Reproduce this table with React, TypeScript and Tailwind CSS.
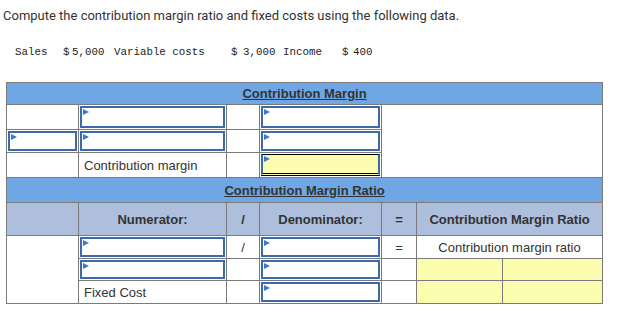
import React from "react";

const Flag = () => (
  <span className="absolute left-[1px] top-[1px] h-0 w-0 border-y-[3px] border-l-[6px] border-y-transparent border-l-[#3b78d0]" />
);

const InputBox = ({ h, yellow = false }: { h: string; yellow?: boolean }) => (
  <div
    className={
      yellow
        ? `relative ${h} w-full border-x-2 border-t border-b-[3px] border-double border-x-[#3d6aa8] border-t-black border-b-black bg-[#fbfcad]`
        : `relative ${h} w-full border-2 border-[#3d6aa8] bg-white`
    }
  >
    <Flag />
  </div>
);

const td = "border border-[#7b7b7b] p-0 align-middle";
const inputTd = "border border-[#7b7b7b] p-[1px] align-middle";

export default function App() {
  return (
    <div className="h-[329px] w-[634px] bg-white text-[#333]" style={{ fontFamily: "'Liberation Sans', Arial, sans-serif" }}>
      <p className="pl-[3px] pt-[7px] text-[13px] leading-[18px] text-[#333]" style={{ fontFamily: "Roboto, sans-serif" }}>
        Compute the contribution margin ratio and fixed costs using the following data.
      </p>

      <div className="mt-[20px] flex text-[10.8px] leading-[14px] text-[#222]" style={{ fontFamily: "'Liberation Mono', 'Courier New', monospace" }}>
        <span className="ml-[15px] w-[48px]">Sales</span>
        <span className="w-[9px]">$</span>
        <span className="w-[42px]">5,000</span>
        <span className="w-[117px]">Variable costs</span>
        <span className="w-[12px]">$</span>
        <span className="w-[40px]">3,000</span>
        <span className="w-[59px]">Income</span>
        <span className="w-[11px]">$</span>
        <span>400</span>
      </div>

      <table className="ml-[6px] mt-[23px] w-[596px] table-fixed border-collapse text-[13px] leading-[15px]">
        <colgroup>
          <col className="w-[72px]" />
          <col className="w-[148px]" />
          <col className="w-[33px]" />
          <col className="w-[122px]" />
          <col className="w-[35px]" />
          <col className="w-[86px]" />
          <col className="w-[100px]" />
        </colgroup>
        <tbody>
          <tr className="h-[22px] bg-[#6ea7e4]">
            <td colSpan={7} className={`${td} text-center font-bold underline`}>
              Contribution Margin
            </td>
          </tr>
          <tr className="h-[25px]">
            <td className={td}></td>
            <td className={inputTd}><InputBox h="h-[22px]" /></td>
            <td className={td}></td>
            <td className={inputTd}><InputBox h="h-[22px]" /></td>
            <td colSpan={3} rowSpan={3} className={td}></td>
          </tr>
          <tr className="h-[23px]">
            <td className={inputTd}><InputBox h="h-[20px]" /></td>
            <td className={inputTd}><InputBox h="h-[20px]" /></td>
            <td className={td}></td>
            <td className={inputTd}><InputBox h="h-[20px]" /></td>
          </tr>
          <tr className="h-[25px]">
            <td className={td}></td>
            <td className={`${td} pl-[5px]`}>Contribution margin</td>
            <td className={td}></td>
            <td className={inputTd}><InputBox h="h-[22px]" yellow /></td>
          </tr>
          <tr className="h-[25px] bg-[#6ea7e4]">
            <td colSpan={7} className={`${td} text-center font-bold underline`}>
              Contribution Margin Ratio
            </td>
          </tr>
          <tr className="h-[33px] bg-[#adbfdc] font-bold">
            <td className={td}></td>
            <td className={`${td} text-center`}>Numerator:</td>
            <td className={`${td} text-center`}>/</td>
            <td className={`${td} text-center`}>Denominator:</td>
            <td className={`${td} text-center`}>=</td>
            <td colSpan={2} className={`${td} text-center`}>Contribution Margin Ratio</td>
          </tr>
          <tr className="h-[23px]">
            <td rowSpan={3} className={td}></td>
            <td className={inputTd}><InputBox h="h-[20px]" /></td>
            <td className={`${td} text-center`}>/</td>
            <td className={inputTd}><InputBox h="h-[20px]" /></td>
            <td className={`${td} text-center`}>=</td>
            <td colSpan={2} className={`${td} text-center`}>Contribution margin ratio</td>
          </tr>
          <tr className="h-[22px]">
            <td className={inputTd}><InputBox h="h-[19px]" /></td>
            <td className={td}></td>
            <td className={inputTd}><InputBox h="h-[19px]" /></td>
            <td className={td}></td>
            <td className={`${td} bg-[#fbfcad]`}></td>
            <td className={`${td} bg-[#fbfcad]`}></td>
          </tr>
          <tr className="h-[23px]">
            <td className={`${td} pl-[5px]`}>Fixed Cost</td>
            <td className={td}></td>
            <td className={inputTd}><InputBox h="h-[20px]" /></td>
            <td className={td}></td>
            <td className={`${td} bg-[#fbfcad]`}></td>
            <td className={`${td} bg-[#fbfcad]`}></td>
          </tr>
        </tbody>
      </table>
    </div>
  );
}
